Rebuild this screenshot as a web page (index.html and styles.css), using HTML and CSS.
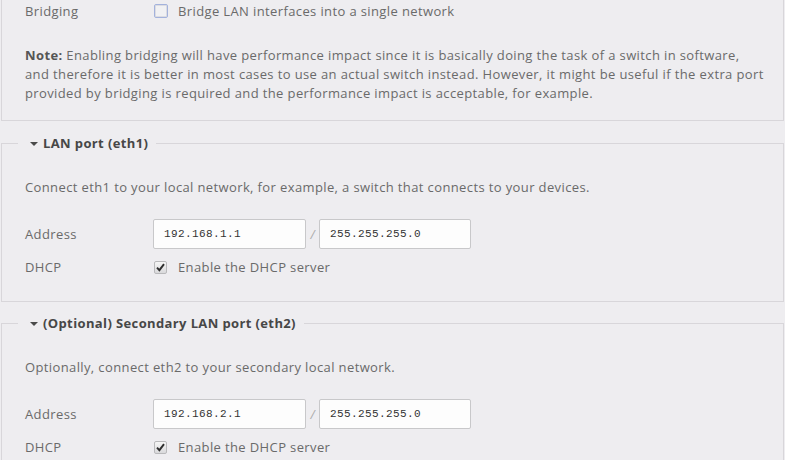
FILE: index.html
```html
<!DOCTYPE html>
<html lang="en">
<head>
<meta charset="utf-8">
<title>LAN settings</title>
<link rel="stylesheet" href="styles.css">
</head>
<body>
<div class="page">
  <section class="panel panel-top">
    <div class="row">
      <span class="label">Bridging</span>
      <label class="check"><span class="box box-off"></span>Bridge LAN interfaces into a single network</label>
    </div>
    <p class="note"><strong>Note:</strong> Enabling bridging will have performance impact since it is basically doing the task of a switch in software,<br>and therefore it is better in most cases to use an actual switch instead. However, it might be useful if the extra port<br>provided by bridging is required and the performance impact is acceptable, for example.</p>
  </section>

  <fieldset class="panel fs fs-first">
    <legend><span class="caret"></span>LAN port (eth1)</legend>
    <div class="fs-body">
      <p class="desc">Connect eth1 to your local network, for example, a switch that connects to your devices.</p>
      <div class="row row-addr">
        <span class="label">Address</span>
        <div class="addr"><input class="ip" type="text" value="192.168.1.1"><span class="slash">/</span><input class="ip" type="text" value="255.255.255.0"></div>
      </div>
      <div class="row row-dhcp">
        <span class="label">DHCP</span>
        <label class="check"><span class="box box-on"><svg width="9" height="9" viewBox="0 0 9 9"><path d="M1 4.6 L3.4 7.2 L8 1.2" fill="none" stroke="#2e2e2e" stroke-width="1.9"/></svg></span>Enable the DHCP server</label>
      </div>
    </div>
  </fieldset>

  <fieldset class="panel fs">
    <legend><span class="caret"></span>(Optional) Secondary LAN port (eth2)</legend>
    <div class="fs-body">
      <p class="desc">Optionally, connect eth2 to your secondary local network.</p>
      <div class="row row-addr">
        <span class="label">Address</span>
        <div class="addr"><input class="ip" type="text" value="192.168.2.1"><span class="slash">/</span><input class="ip" type="text" value="255.255.255.0"></div>
      </div>
      <div class="row row-dhcp">
        <span class="label">DHCP</span>
        <label class="check"><span class="box box-on"><svg width="9" height="9" viewBox="0 0 9 9"><path d="M1 4.6 L3.4 7.2 L8 1.2" fill="none" stroke="#2e2e2e" stroke-width="1.9"/></svg></span>Enable the DHCP server</label>
      </div>
    </div>
  </fieldset>
</div>
</body>
</html>
```

FILE: styles.css
```css
html, body {
  margin: 0;
  background: #eeedf0;
}
body {
  font-family: "Open Sans", "Noto Sans", sans-serif;
  font-size: 13px;
  line-height: 19px;
  letter-spacing: 0.38px;
  color: #6a6a6a;
}
.page {
  padding: 0 1px;
}
.panel {
  border: 1px solid #d8d6da;
  margin: 0;
  min-width: 0;
}
.panel-top {
  border-top: none;
  padding: 0 0 17px 23px;
}
.row {
  display: grid;
  grid-template-columns: 128px auto;
  align-items: center;
}
.panel-top .row {
  height: 22px;
}
.label {
  color: #6a6a6a;
}
.check {
  display: flex;
  align-items: center;
  color: #6a6a6a;
}
.box {
  box-sizing: border-box;
  display: flex;
  align-items: center;
  justify-content: center;
  margin-left: 1px;
  margin-right: 10px;
}
.box-off {
  width: 14px;
  height: 14px;
  border: 1px solid #a3b2dc;
  border-radius: 2px;
  background: #f1f1f3;
  box-shadow: inset 0 0 0 1px #dcdce2;
}
.box-on {
  width: 13px;
  height: 13px;
  border: 1px solid #b9b9bb;
  border-radius: 2px;
  background: linear-gradient(#f6f6f6, #d9d9db);
  margin-right: 11px;
}
.note {
  margin: 24px 0 0;
}
.note strong {
  color: #555;
  font-weight: 700;
}
.fs {
  padding: 0 0 24px 0;
  margin-top: 12px;
}
.fs-first {
  margin-top: 13px;
}
.fs legend {
  margin-left: 16px;
  padding: 0 8px 0 12px;
  font-weight: 700;
  color: #474747;
  display: flex;
  align-items: center;
}
.caret {
  width: 0;
  height: 0;
  border-left: 4px solid transparent;
  border-right: 4px solid transparent;
  border-top: 4px solid #4a4a4a;
  margin-right: 5px;
  margin-top: 1px;
}
.fs-body {
  padding-left: 23px;
}
.desc {
  margin: 25px 0 0;
}
.row-addr {
  margin-top: 22px;
}
.addr {
  display: flex;
  align-items: center;
}
.ip {
  box-sizing: border-box;
  width: 153px;
  height: 30px;
  border: 1px solid #c8c8ca;
  border-radius: 2px;
  background: #fdfdfd;
  padding: 0 0 0 10px;
  margin: 0;
  font-family: "Liberation Mono", "DejaVu Sans Mono", monospace;
  font-size: 11px;
  letter-spacing: 0.4px;
  color: #333;
  outline: none;
}
.ip + .slash + .ip {
  width: 152px;
}
.slash {
  width: 13px;
  text-align: center;
  color: #aaa;
  font-style: italic;
  font-size: 12px;
  letter-spacing: 0;
}
.row-dhcp {
  margin-top: 9px;
  height: 19px;
}
```
